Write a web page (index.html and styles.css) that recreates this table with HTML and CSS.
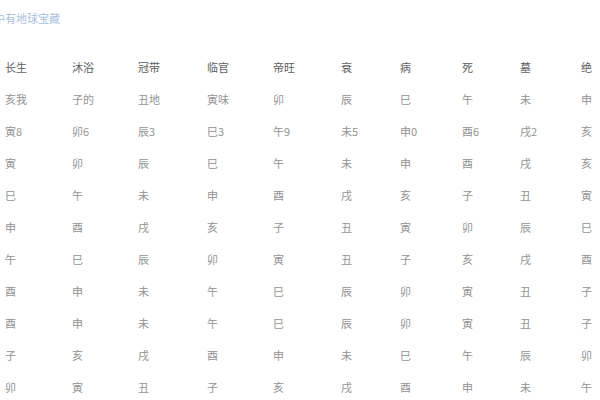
FILE: index.html
```html
<!DOCTYPE html>
<html lang="zh">
<head>
<meta charset="utf-8">
<link rel="stylesheet" href="styles.css">
</head>
<body>
<div class="title">中有地球宝藏</div>
<div class="table">
  <div class="row head"><span>长生</span><span>沐浴</span><span>冠带</span><span>临官</span><span>帝旺</span><span>衰</span><span>病</span><span>死</span><span>墓</span><span>绝</span></div>
  <div class="row"><span>亥我</span><span>子的</span><span>丑地</span><span>寅味</span><span>卯</span><span>辰</span><span>巳</span><span>午</span><span>未</span><span>申</span></div>
  <div class="row"><span>寅8</span><span>卯6</span><span>辰3</span><span>巳3</span><span>午9</span><span>未5</span><span>申0</span><span>酉6</span><span>戌2</span><span>亥</span></div>
  <div class="row"><span>寅</span><span>卯</span><span>辰</span><span>巳</span><span>午</span><span>未</span><span>申</span><span>酉</span><span>戌</span><span>亥</span></div>
  <div class="row"><span>巳</span><span>午</span><span>未</span><span>申</span><span>酉</span><span>戌</span><span>亥</span><span>子</span><span>丑</span><span>寅</span></div>
  <div class="row"><span>申</span><span>酉</span><span>戌</span><span>亥</span><span>子</span><span>丑</span><span>寅</span><span>卯</span><span>辰</span><span>巳</span></div>
  <div class="row"><span>午</span><span>巳</span><span>辰</span><span>卯</span><span>寅</span><span>丑</span><span>子</span><span>亥</span><span>戌</span><span>酉</span></div>
  <div class="row"><span>酉</span><span>申</span><span>未</span><span>午</span><span>巳</span><span>辰</span><span>卯</span><span>寅</span><span>丑</span><span>子</span></div>
  <div class="row"><span>酉</span><span>申</span><span>未</span><span>午</span><span>巳</span><span>辰</span><span>卯</span><span>寅</span><span>丑</span><span>子</span></div>
  <div class="row"><span>子</span><span>亥</span><span>戌</span><span>酉</span><span>申</span><span>未</span><span>巳</span><span>午</span><span>辰</span><span>卯</span></div>
  <div class="row"><span>卯</span><span>寅</span><span>丑</span><span>子</span><span>亥</span><span>戌</span><span>酉</span><span>申</span><span>未</span><span>午</span></div>
</div>
</body>
</html>
```
FILE: styles.css
```css
html, body {
  margin: 0;
  padding: 0;
  background: #ffffff;
}
body {
  font-family: "Noto Sans CJK SC", "Noto Sans", sans-serif;
  width: 600px;
  height: 400px;
  overflow: hidden;
}
.title {
  padding-top: 10px;
  height: 16px;
  line-height: 16px;
  font-size: 11px;
  color: #a6bfe0;
  text-indent: -6px;
  white-space: nowrap;
}
.table {
  margin-top: 25px;
  padding-left: 5px;
}
.row {
  display: grid;
  grid-template-columns: 67px 66px 69px 66px 68px 59px 62px 58px 61px 40px;
  height: 32px;
  align-items: center;
  font-size: 11px;
  color: #939393;
  white-space: nowrap;
}
.row.head {
  color: #606060;
}
```
